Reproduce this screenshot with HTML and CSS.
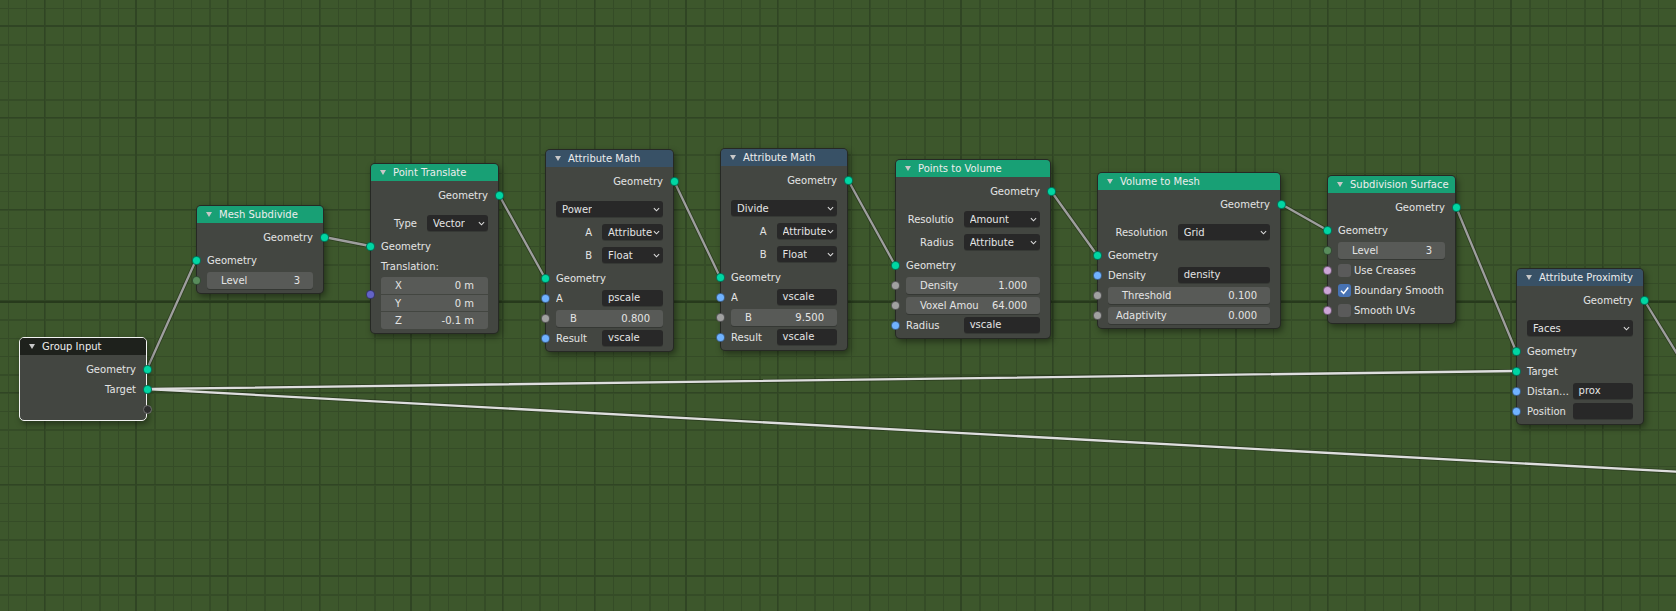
FILE: index.html
```html
<!DOCTYPE html>
<html>
<head>
<meta charset="utf-8">
<link rel="stylesheet" href="styles.css">
</head>
<body>
<div class="canvas">
  <svg class="wires" width="1676" height="611" viewBox="0 0 1676 611">
    <g class="wo">
      <line x1="147" y1="369" x2="196" y2="260"/>
      <line x1="324" y1="237" x2="370" y2="246"/>
      <line x1="499" y1="195" x2="545" y2="278"/>
      <line x1="674" y1="181" x2="720" y2="277"/>
      <line x1="848" y1="180" x2="895" y2="265"/>
      <line x1="1051" y1="191" x2="1097" y2="255"/>
      <line x1="1281" y1="204" x2="1327" y2="230"/>
      <line x1="1456" y1="207" x2="1516" y2="351"/>
      <line x1="1644" y1="300" x2="1700" y2="391"/>
      <line x1="147" y1="389" x2="1516" y2="371"/>
      <line x1="147" y1="389" x2="1700" y2="473"/>
    </g>
    <g class="wn">
      <line x1="147" y1="369" x2="196" y2="260"/>
      <line x1="324" y1="237" x2="370" y2="246"/>
      <line x1="499" y1="195" x2="545" y2="278"/>
      <line x1="674" y1="181" x2="720" y2="277"/>
      <line x1="848" y1="180" x2="895" y2="265"/>
      <line x1="1051" y1="191" x2="1097" y2="255"/>
      <line x1="1281" y1="204" x2="1327" y2="230"/>
      <line x1="1456" y1="207" x2="1516" y2="351"/>
      <line x1="1644" y1="300" x2="1700" y2="391"/>
    </g>
    <g class="ws">
      <line x1="147" y1="389" x2="1516" y2="371"/>
      <line x1="147" y1="389" x2="1700" y2="473"/>
    </g>
  </svg>

  <!-- Group Input -->
  <div class="node active" style="left:19px;top:337px;width:128px">
    <div class="head dark"><svg class="tri" viewBox="0 0 6 5"><path d="M0 0h6L3 5z"/></svg>Group Input</div>
    <div class="body tight">
      <div class="row out"><span>Geometry</span><i class="sock geo"></i></div>
      <div class="row out"><span>Target</span><i class="sock geo"></i></div>
      <div class="row out"><i class="sock virt"></i></div>
    </div>
  </div>

  <!-- Mesh Subdivide -->
  <div class="node" style="left:196px;top:205px;width:128px">
    <div class="head green"><svg class="tri" viewBox="0 0 6 5"><path d="M0 0h6L3 5z"/></svg>Mesh Subdivide</div>
    <div class="body">
      <div class="row out"><span>Geometry</span><i class="sock geo"></i></div>
      <div class="spacer"></div>
      <div class="row in"><i class="sock geo"></i><span>Geometry</span></div>
      <div class="row in"><i class="sock int"></i><div class="slider"><span>Level</span><span>3</span></div></div>
    </div>
  </div>

  <!-- Point Translate -->
  <div class="node" style="left:370px;top:163px;width:129px">
    <div class="head green"><svg class="tri" viewBox="0 0 6 5"><path d="M0 0h6L3 5z"/></svg>Point Translate</div>
    <div class="body">
      <div class="row out"><span>Geometry</span><i class="sock geo"></i></div>
      <div class="settings">
        <div class="row"><span class="lbl">Type</span><div class="dd"><span>Vector</span><svg class="chev" viewBox="0 0 8 5"><path d="M1 1l3 3 3-3"/></svg></div></div>
      </div>
      <div class="row in"><i class="sock geo"></i><span>Geometry</span></div>
      <div class="row"><span>Translation:</span></div>
      <div class="vecwrap">
        <i class="sock vec"></i>
        <div class="vec-block">
          <div class="vrow"><span>X</span><span>0 m</span></div>
          <div class="vrow"><span>Y</span><span>0 m</span></div>
          <div class="vrow"><span>Z</span><span>-0.1 m</span></div>
        </div>
      </div>
    </div>
  </div>

  <!-- Attribute Math 1 -->
  <div class="node" style="left:545px;top:149px;width:129px">
    <div class="head blue"><svg class="tri" viewBox="0 0 6 5"><path d="M0 0h6L3 5z"/></svg>Attribute Math</div>
    <div class="body">
      <div class="row out"><span>Geometry</span><i class="sock geo"></i></div>
      <div class="settings">
        <div class="row"><div class="dd full"><span>Power</span><svg class="chev" viewBox="0 0 8 5"><path d="M1 1l3 3 3-3"/></svg></div></div>
        <div class="row"><span class="lbl">A</span><div class="dd"><span>Attribute</span><svg class="chev" viewBox="0 0 8 5"><path d="M1 1l3 3 3-3"/></svg></div></div>
        <div class="row"><span class="lbl">B</span><div class="dd"><span>Float</span><svg class="chev" viewBox="0 0 8 5"><path d="M1 1l3 3 3-3"/></svg></div></div>
      </div>
      <div class="row in"><i class="sock geo"></i><span>Geometry</span></div>
      <div class="row in"><i class="sock str"></i><span class="lbl-l">A</span><div class="tf">pscale</div></div>
      <div class="row in"><i class="sock flt"></i><div class="slider"><span>B</span><span>0.800</span></div></div>
      <div class="row in"><i class="sock str"></i><span class="lbl-l">Result</span><div class="tf">vscale</div></div>
    </div>
  </div>

  <!-- Attribute Math 2 -->
  <div class="node" style="left:720px;top:148px;width:128px">
    <div class="head blue"><svg class="tri" viewBox="0 0 6 5"><path d="M0 0h6L3 5z"/></svg>Attribute Math</div>
    <div class="body">
      <div class="row out"><span>Geometry</span><i class="sock geo"></i></div>
      <div class="settings">
        <div class="row"><div class="dd full"><span>Divide</span><svg class="chev" viewBox="0 0 8 5"><path d="M1 1l3 3 3-3"/></svg></div></div>
        <div class="row"><span class="lbl">A</span><div class="dd"><span>Attribute</span><svg class="chev" viewBox="0 0 8 5"><path d="M1 1l3 3 3-3"/></svg></div></div>
        <div class="row"><span class="lbl">B</span><div class="dd"><span>Float</span><svg class="chev" viewBox="0 0 8 5"><path d="M1 1l3 3 3-3"/></svg></div></div>
      </div>
      <div class="row in"><i class="sock geo"></i><span>Geometry</span></div>
      <div class="row in"><i class="sock str"></i><span class="lbl-l">A</span><div class="tf">vscale</div></div>
      <div class="row in"><i class="sock flt"></i><div class="slider"><span>B</span><span>9.500</span></div></div>
      <div class="row in"><i class="sock str"></i><span class="lbl-l">Result</span><div class="tf">vscale</div></div>
    </div>
  </div>

  <!-- Points to Volume -->
  <div class="node" style="left:895px;top:159px;width:156px">
    <div class="head green"><svg class="tri" viewBox="0 0 6 5"><path d="M0 0h6L3 5z"/></svg>Points to Volume</div>
    <div class="body">
      <div class="row out"><span>Geometry</span><i class="sock geo"></i></div>
      <div class="settings">
        <div class="row"><span class="lbl">Resolutio</span><div class="dd"><span>Amount</span><svg class="chev" viewBox="0 0 8 5"><path d="M1 1l3 3 3-3"/></svg></div></div>
        <div class="row"><span class="lbl">Radius</span><div class="dd"><span>Attribute</span><svg class="chev" viewBox="0 0 8 5"><path d="M1 1l3 3 3-3"/></svg></div></div>
      </div>
      <div class="row in"><i class="sock geo"></i><span>Geometry</span></div>
      <div class="row in"><i class="sock flt"></i><div class="slider"><span>Density</span><span>1.000</span></div></div>
      <div class="row in"><i class="sock flt"></i><div class="slider"><span>Voxel Amou</span><span>64.000</span></div></div>
      <div class="row in"><i class="sock str"></i><span class="lbl-l">Radius</span><div class="tf">vscale</div></div>
    </div>
  </div>

  <!-- Volume to Mesh -->
  <div class="node" style="left:1097px;top:172px;width:184px">
    <div class="head green"><svg class="tri" viewBox="0 0 6 5"><path d="M0 0h6L3 5z"/></svg>Volume to Mesh</div>
    <div class="body">
      <div class="row out"><span>Geometry</span><i class="sock geo"></i></div>
      <div class="settings">
        <div class="row"><span class="lbl">Resolution</span><div class="dd"><span>Grid</span><svg class="chev" viewBox="0 0 8 5"><path d="M1 1l3 3 3-3"/></svg></div></div>
      </div>
      <div class="row in"><i class="sock geo"></i><span>Geometry</span></div>
      <div class="row in"><i class="sock str"></i><span class="lbl-l">Density</span><div class="tf">density</div></div>
      <div class="row in"><i class="sock flt"></i><div class="slider"><span>Threshold</span><span>0.100</span></div></div>
      <div class="row in"><i class="sock flt"></i><div class="slider narrow"><span>Adaptivity</span><span>0.000</span></div></div>
    </div>
  </div>

  <!-- Subdivision Surface -->
  <div class="node" style="left:1327px;top:175px;width:129px">
    <div class="head green"><svg class="tri" viewBox="0 0 6 5"><path d="M0 0h6L3 5z"/></svg>Subdivision Surface</div>
    <div class="body">
      <div class="row out"><span>Geometry</span><i class="sock geo"></i></div>
      <div class="spacer"></div>
      <div class="row in"><i class="sock geo"></i><span>Geometry</span></div>
      <div class="row in"><i class="sock int"></i><div class="slider"><span>Level</span><span>3</span></div></div>
      <div class="row in"><i class="sock bool"></i><span class="cb"></span><span>Use Creases</span></div>
      <div class="row in"><i class="sock bool"></i><span class="cb on"><svg viewBox="0 0 13 13"><path d="M3 6.8l2.6 2.6L10.2 3.6"/></svg></span><span>Boundary Smooth</span></div>
      <div class="row in"><i class="sock bool"></i><span class="cb"></span><span>Smooth UVs</span></div>
    </div>
  </div>

  <!-- Attribute Proximity -->
  <div class="node" style="left:1516px;top:268px;width:128px">
    <div class="head blue"><svg class="tri" viewBox="0 0 6 5"><path d="M0 0h6L3 5z"/></svg>Attribute Proximity</div>
    <div class="body">
      <div class="row out"><span>Geometry</span><i class="sock geo"></i></div>
      <div class="settings">
        <div class="row"><div class="dd full"><span>Faces</span><svg class="chev" viewBox="0 0 8 5"><path d="M1 1l3 3 3-3"/></svg></div></div>
      </div>
      <div class="row in"><i class="sock geo"></i><span>Geometry</span></div>
      <div class="row in"><i class="sock geo"></i><span>Target</span></div>
      <div class="row in"><i class="sock str"></i><span class="lbl-l">Distan…</span><div class="tf">prox</div></div>
      <div class="row in"><i class="sock str"></i><span class="lbl-l">Position</span><div class="tf"></div></div>
    </div>
  </div>
</div>
</body>
</html>
```

FILE: styles.css
```css
html, body {
  margin: 0;
  padding: 0;
}
body {
  width: 1676px;
  height: 611px;
  overflow: hidden;
  background: #3c552c;
  font-family: "DejaVu Sans", sans-serif;
  font-size: 10px;
  color: #e4e4e4;
}
.canvas {
  position: relative;
  width: 1676px;
  height: 611px;
  overflow: hidden;
  background-color: #3d572c;
  background-image:
    linear-gradient(to bottom, transparent 301px, #273a1c 301px, #273a1c 302.8px, transparent 302.8px),
    repeating-linear-gradient(to right, transparent 0, transparent 43.6px, #304524 43.6px, #304524 45.1px, transparent 45.1px, transparent 91.667px),
    repeating-linear-gradient(to bottom, transparent 0, transparent 25.3px, #304524 25.3px, #304524 26.8px, transparent 26.8px, transparent 91.667px),
    repeating-linear-gradient(to right, transparent 0, transparent 7.8px, #354c27 7.8px, #354c27 8.9px, transparent 8.9px, transparent 18.333px),
    repeating-linear-gradient(to bottom, transparent 0, transparent 7.8px, #354c27 7.8px, #354c27 8.9px, transparent 8.9px, transparent 18.333px);
}
.wires {
  position: absolute;
  left: 0;
  top: 0;
}
.wires line {
  fill: none;
  stroke-linecap: round;
}
.wo line {
  stroke: rgba(20, 25, 15, 0.4);
  stroke-width: 4;
}
.wn line {
  stroke: #9e9e9e;
  stroke-width: 2.3;
}
.ws line {
  stroke: #dedede;
  stroke-width: 2.3;
}

/* nodes */
.node {
  position: absolute;
  box-sizing: border-box;
  background: #434641;
  border: 1px solid rgba(15, 18, 12, 0.55);
  border-radius: 5px;
  box-shadow: 2px 3px 6px rgba(0, 0, 0, 0.4);
}
.node.active {
  border-color: #f2f2f2;
}
.head {
  height: 17px;
  display: flex;
  align-items: center;
  padding-left: 9px;
  border-radius: 4px 4px 0 0;
  color: #ededed;
  white-space: nowrap;
  overflow: hidden;
}
.head.green { background: #18a075; }
.head.blue { background: #385166; }
.head.dark { background: #1e211c; }
.tri {
  width: 6px;
  height: 5px;
  margin-right: 7px;
  fill: #c8c8c8;
  flex: none;
}
.body {
  padding: 4px 0 3px;
}
.body.tight {
  padding-bottom: 1px;
}
.row {
  position: relative;
  height: 20px;
  display: flex;
  align-items: center;
  padding: 0 10px;
  white-space: nowrap;
}
.row.out {
  justify-content: flex-end;
}
.spacer {
  height: 3px;
}
.settings {
  display: flex;
  flex-direction: column;
  gap: 3px;
  padding: 8px 0 3px;
}

/* sockets */
.sock {
  position: absolute;
  top: 50%;
  width: 9px;
  height: 9px;
  margin-top: -4.5px;
  box-sizing: border-box;
  border-radius: 50%;
  border: 1px solid rgba(0, 0, 0, 0.45);
}
.in .sock { left: -5.5px; }
.out .sock { right: -5.5px; }
.sock.geo { background: #00d6a3; }
.sock.int { background: #598c5c; }
.sock.flt { background: #a1a1a1; }
.sock.str { background: #70b2ff; }
.sock.vec { background: #6363c7; }
.sock.bool { background: #cca6d6; }
.sock.virt { background: #2e2e2e; border-color: #707070; }

/* widgets */
.lbl {
  flex: 1;
  text-align: right;
  padding-right: 10px;
  overflow: hidden;
}
.lbl-l {
  flex: 1;
  overflow: hidden;
}
.dd {
  width: 57%;
  height: 16px;
  box-sizing: border-box;
  background: #282828;
  border-radius: 3px;
  display: flex;
  align-items: center;
  justify-content: space-between;
  padding: 0 3px 0 6px;
  box-shadow: 0 1px 0 rgba(0, 0, 0, 0.18);
  overflow: hidden;
}
.dd.full {
  width: 100%;
}
.dd span {
  overflow: hidden;
}
.chev {
  width: 7px;
  height: 5px;
  flex: none;
  margin-left: 1px;
}
.chev path {
  fill: none;
  stroke: #dcdcdc;
  stroke-width: 1.2;
}
.tf {
  width: 57%;
  height: 16px;
  box-sizing: border-box;
  background: #282828;
  border-radius: 3px;
  padding-left: 6px;
  line-height: 16px;
  box-shadow: 0 1px 0 rgba(0, 0, 0, 0.18);
}
.slider {
  flex: 1;
  height: 17px;
  background: #585a57;
  border-radius: 3px;
  display: flex;
  align-items: center;
  justify-content: space-between;
  padding: 0 13px 0 14px;
  box-shadow: 0 1px 0 rgba(0, 0, 0, 0.2);
}
.slider.narrow {
  padding-left: 8px;
}
.vecwrap {
  position: relative;
  padding: 1px 10px 1px;
}
.vecwrap .sock {
  left: -5.5px;
  top: 18px;
}
.vec-block {
  display: flex;
  flex-direction: column;
  gap: 1px;
}
.vrow {
  height: 16.7px;
  background: #585a57;
  display: flex;
  align-items: center;
  justify-content: space-between;
  padding: 0 14px;
}
.vrow:first-child { border-radius: 3px 3px 0 0; }
.vrow:last-child { border-radius: 0 0 3px 3px; }
.cb {
  width: 13px;
  height: 13px;
  box-sizing: border-box;
  background: #5a5a5a;
  border-radius: 3px;
  margin-right: 3px;
  flex: none;
}
.cb.on {
  background: #4772b3;
}
.cb svg {
  display: block;
  width: 13px;
  height: 13px;
}
.cb svg path {
  fill: none;
  stroke: #ffffff;
  stroke-width: 1.6;
}
```
